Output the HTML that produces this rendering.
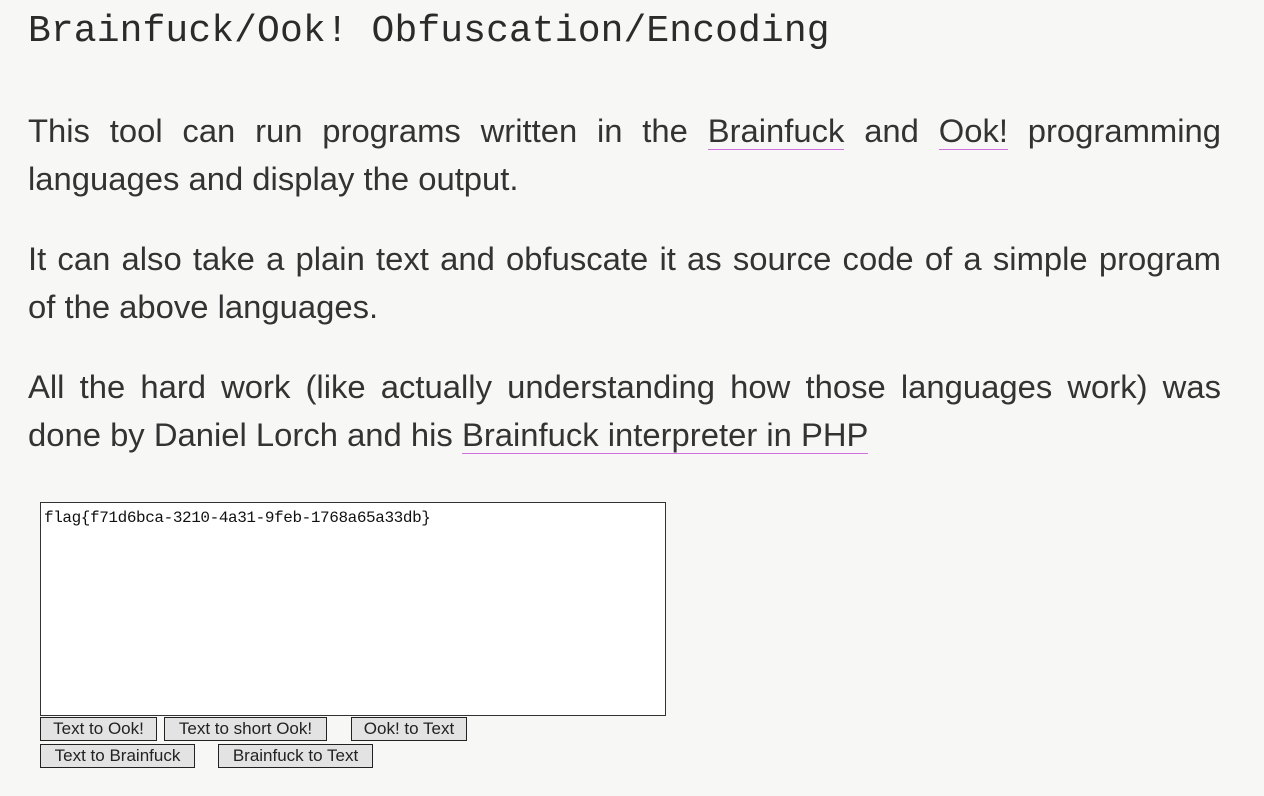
<!DOCTYPE html>
<html><head><meta charset="utf-8"><style>
html,body{margin:0;padding:0;width:1264px;height:796px;overflow:hidden;background:#f7f7f6;}
body{position:relative;font-family:"Liberation Sans",sans-serif;color:#333;}
h1{position:absolute;left:28px;top:8px;margin:0;font-family:"Liberation Mono",monospace;font-weight:normal;font-size:38px;line-height:48px;color:#2b2b2b;letter-spacing:0.1px;}
.l{position:absolute;left:28px;width:1193px;margin:0;font-size:32.8px;line-height:48px;white-space:nowrap;color:#333;}
.j{text-align:justify;text-align-last:justify;white-space:normal;}
a{color:#333;text-decoration:none;border-bottom:1.5px solid #d36ee0;}
.ta{position:absolute;left:40px;top:502px;width:626px;height:214px;border:1.5px solid #333;background:#fff;font-family:"Liberation Mono",monospace;font-size:16px;letter-spacing:-0.4px;color:#111;padding:6px 3px;box-sizing:border-box;}
.b{position:absolute;height:24px;box-sizing:border-box;border:1.5px solid #222;background:#e3e3e3;font-size:17px;line-height:21px;color:#222;text-align:center;}
</style></head><body>
<h1>Brainfuck/Ook! Obfuscation/Encoding</h1>
<div class="l j" style="top:107px">This tool can run programs written in the <a>Brainfuck</a> and <a>Ook!</a> programming</div>
<div class="l" style="top:155px">languages and display the output.</div>
<div class="l j" style="top:235px">It can also take a plain text and obfuscate it as source code of a simple program</div>
<div class="l" style="top:283px">of the above languages.</div>
<div class="l j" style="top:363px">All the hard work (like actually understanding how those languages work) was</div>
<div class="l" style="top:411px">done by Daniel Lorch and his <a>Brainfuck interpreter in PHP</a></div>
<div class="ta">flag{f71d6bca-3210-4a31-9feb-1768a65a33db}</div>
<div class="b" style="left:40px;top:717px;width:117px">Text to Ook!</div>
<div class="b" style="left:164px;top:717px;width:163px">Text to short Ook!</div>
<div class="b" style="left:351px;top:717px;width:116px">Ook! to Text</div>
<div class="b" style="left:40px;top:744px;width:155px">Text to Brainfuck</div>
<div class="b" style="left:218px;top:744px;width:155px">Brainfuck to Text</div>
</body></html>
